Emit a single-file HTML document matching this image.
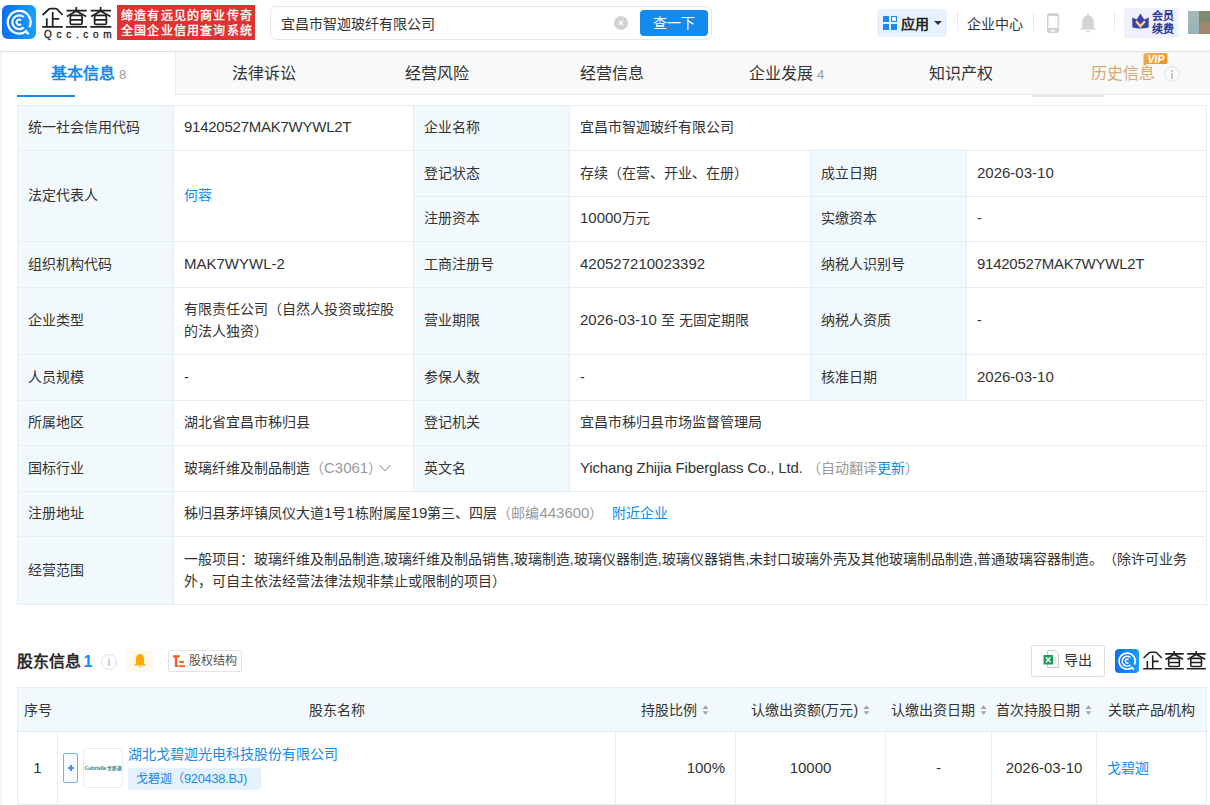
<!DOCTYPE html>
<html lang="zh-CN"><head><meta charset="utf-8">
<style>
*{box-sizing:border-box;margin:0;padding:0}
html,body{text-spacing-trim:space-all;width:1210px;height:805px;overflow:hidden;background:#f5f5f5;font-family:"Liberation Sans",sans-serif;color:#333;font-size:14px}
.abs{position:absolute}
#hdr{position:absolute;left:0;top:0;width:1210px;height:52px;background:#fff;border-bottom:1px solid #e0e0e0}
#card{position:absolute;left:2px;top:52px;width:1208px;height:753px;background:#fff}
.tab{position:absolute;top:52px;height:43px;background:#f7f7f7;border-left:1px solid #ebebeb;border-bottom:1px solid #ebebeb;font-size:16px;color:#333;text-align:center;line-height:42px}
.t{position:absolute;white-space:nowrap;line-height:20px}
.lb{position:absolute;background:#f2f9fc}
.hl{position:absolute;height:1px;background:#e4eef6}
.c{position:absolute;display:flex;align-items:center;padding-left:10px;font-size:14px;line-height:22px;color:#333;white-space:nowrap}
.n{font-size:15px}
.vl{position:absolute;width:1px;background:#e4eef6}
</style></head><body>
<div id="hdr">
  <div class="abs" style="left:2px;top:5px;width:34px;height:34px;border-radius:6px;background:linear-gradient(90deg,#0d6ff0,#16a0fd)">
    <svg width="34" height="34" viewBox="0 0 34 34" style="position:absolute;left:0;top:0">
      <path d="M24.06 26.31 A11.4 11.4 0 1 1 27.45 22.2" fill="none" stroke="#fff" stroke-width="2.2"/>
      <path d="M23.1 25.2 L26.6 29.2" fill="none" stroke="#fff" stroke-width="2.2"/>
      <path d="M21.82 22.33 A6.9 6.9 0 1 1 21.73 11.99" fill="none" stroke="#fff" stroke-width="2.2"/>
      <path d="M19.04 19.04 A2.6 2.6 0 1 1 19.04 15.36" fill="none" stroke="#fff" stroke-width="2"/>
    </svg>
  </div>
  <svg class="abs" style="left:0;top:0" width="116" height="45" viewBox="0 0 116 45">
    <g id="logoG" fill="none" stroke="#222" stroke-width="1.75">
      <path d="M42.6 15 L49 9 Q49.6 8.6 50.4 8.6 L55.4 8.6 Q56.2 8.6 56.8 9 L62.6 15"/>
      <path d="M52.7 12 V26.7 M52.7 18.75 H59.2 M46.8 18.3 V26.7 M42.2 26.8 H62.8"/>
      <g id="cha">
        <path d="M66.4 10.5 H86.8 M76.3 7 V11.2 M76 11.2 L66.8 16.6 M76.6 11.2 L86.2 16.4"/>
        <rect x="70.3" y="15.4" width="11.8" height="9" rx="1.5"/>
        <path d="M70.3 19.9 H82.1 M65.9 26.8 H87"/>
      </g>
      <use href="#cha" x="24.3"/>
    </g>
  </svg>
  <div class="t" style="left:44px;top:28.5px;font-size:10px;line-height:12px;color:#222;letter-spacing:4.7px;-webkit-text-stroke:0.3px #222">Qcc.com</div>
  <div class="abs" style="left:117px;top:5px;width:138px;height:35px;background:#e03331"></div>
  <div class="t" style="left:121px;top:8.5px;font-size:12px;line-height:15.3px;color:#fff;letter-spacing:1.2px;-webkit-text-stroke:0.35px #fff">缔造有远见的商业传奇<br>全国企业信用查询系统</div>
  <div class="abs" style="left:270px;top:6px;width:442px;height:34px;border:1px solid #e6e6e6;border-radius:6px;background:#fff"></div>
  <div class="t" style="left:281px;top:14px;font-size:14px;color:#333">宜昌市智迦玻纤有限公司</div>
  <div class="abs" style="left:614px;top:16px;width:14px;height:14px;border-radius:7px;background:#d2d2d2">
    <svg width="14" height="14" viewBox="0 0 14 14" style="position:absolute;left:0;top:0"><path d="M5 5 L9 9 M9 5 L5 9" stroke="#fff" stroke-width="1.1"/></svg>
  </div>
  <div class="abs" style="left:640px;top:10px;width:68px;height:26px;border-radius:4px;background:#128bed;color:#fff;font-size:14px;line-height:26px;text-align:center;letter-spacing:0px">查一下</div>
  <div class="abs" style="left:877px;top:9px;width:70px;height:28px;border-radius:4px;background:#e8f2fe"></div>
  <div class="abs" style="left:883px;top:16px;width:14px;height:14px">
    <div class="abs" style="left:0;top:0;width:6px;height:6px;background:#1a8af0"></div>
    <div class="abs" style="left:8px;top:0;width:6px;height:6px;border:1.5px solid #1a8af0"></div>
    <div class="abs" style="left:0;top:8px;width:6px;height:6px;background:#1a8af0"></div>
    <div class="abs" style="left:8px;top:8px;width:6px;height:6px;background:#1a8af0"></div>
  </div>
  <div class="t" style="left:901px;top:14px;font-size:14px;font-weight:bold;color:#222">应用</div>
  <div class="abs" style="left:934px;top:21px;width:0;height:0;border-left:4px solid transparent;border-right:4px solid transparent;border-top:4px solid #333"></div>
  <div class="abs" style="left:957px;top:13px;width:1px;height:18px;background:#e8e8e8"></div>
  <div class="t" style="left:967px;top:14px;font-size:14px;color:#333">企业中心</div>
  <div class="abs" style="left:1033px;top:13px;width:1px;height:18px;background:#e8e8e8"></div>
  <svg class="abs" style="left:1046px;top:12px" width="14" height="22" viewBox="0 0 14 22"><path d="M3.5 1 H10.5 Q13 1 13 3.5 V18.5 Q13 21 10.5 21 H3.5 Q1 21 1 18.5 V3.5 Q1 1 3.5 1Z M2.5 4 V16.1 H11.5 V4Z M4.8 18 V19.5 H9 V18Z" fill="#d2d2d2" fill-rule="evenodd"/></svg>
  <svg class="abs" style="left:1079px;top:12px" width="18" height="22" viewBox="0 0 18 22"><path d="M9 1 L10.3 3.4 Q14.8 4.4 14.8 10 V15.2 L17.2 17.8 H0.8 L3.2 15.2 V10 Q3.2 4.4 7.7 3.4Z" fill="#d4d4d4"/><path d="M6.8 19 H11.2 Q10.5 20.6 9 20.6 Q7.5 20.6 6.8 19Z" fill="#d4d4d4"/></svg>
  <div class="abs" style="left:1114px;top:13px;width:1px;height:18px;background:#e8e8e8"></div>
  <div class="abs" style="left:1124px;top:8px;width:55px;height:30px;border-radius:2px;background:#f0f1fd"></div>
  <svg class="abs" style="left:1131px;top:13px" width="19" height="17" viewBox="0 0 19 17"><path d="M1.2 4.4 L5.7 6.4 L9.4 0.4 L13.2 6.4 L17.8 4.4 L17.6 14.6 Q9.4 16.6 1.4 14.6Z" fill="#3a44a6"/><path d="M5.1 8.3 L9.4 13.2 L13.9 8.3" fill="none" stroke="#fcd28e" stroke-width="2.3"/></svg>
  <div class="t" style="left:1152px;top:9.5px;font-size:11px;line-height:13px;font-weight:bold;color:#2f3a9a">会员<br>续费</div>
  <div class="abs" style="left:1188px;top:11px;width:11px;height:11px;background:#a3b8b6"></div>
  <div class="abs" style="left:1199px;top:11px;width:11px;height:11px;background:#7f8a73"></div>
  <div class="abs" style="left:1188px;top:22px;width:11px;height:12px;background:#9ab4b8"></div>
  <div class="abs" style="left:1199px;top:22px;width:11px;height:12px;background:#9e8670"></div>
</div>
<div id="card"></div>
<div class="abs" style="left:2px;top:52px;width:173px;height:43px;background:#fff"></div>
<div class="abs" style="left:175px;top:52px;width:1035px;height:43px;background:#f9f9f9;border-left:1px solid #ebebeb;border-bottom:1px solid #ebebeb"></div>
<div class="t" style="left:51px;top:64px;font-size:16px;color:#128bed;font-weight:bold">基本信息</div>
<div class="t" style="left:119px;top:65px;font-size:13px;color:#999">8</div>
<div class="abs" style="left:17px;top:95px;width:58px;height:2px;background:#128bed"></div>
<div class="t" style="left:231.5px;top:64px;font-size:16px;color:#333">法律诉讼</div>
<div class="t" style="left:405.4px;top:64px;font-size:16px;color:#333">经营风险</div>
<div class="t" style="left:579.8px;top:64px;font-size:16px;color:#333">经营信息</div>
<div class="t" style="left:928.7px;top:64px;font-size:16px;color:#333">知识产权</div>
<div class="t" style="left:749px;top:64px;font-size:16px;color:#333">企业发展</div>
<div class="t" style="left:817px;top:65px;font-size:13px;color:#999">4</div>
<div class="t" style="left:1091px;top:64px;font-size:16px;color:#d6a873">历史信息</div>
<div class="abs" style="left:1164px;top:66px;width:16px;height:16px;border:1.2px solid #dde1e8;border-radius:50%"></div><div class="abs" style="left:1171.2px;top:70px;width:1.6px;height:1.6px;background:#c5cbd6"></div><div class="abs" style="left:1171.2px;top:73px;width:1.6px;height:6px;background:#c5cbd6"></div>
<svg class="abs" style="left:1143px;top:53px" width="25" height="13" viewBox="0 0 25 13"><defs><linearGradient id="vg" x1="0" y1="0" x2="1" y2="1"><stop offset="0" stop-color="#f4b355"/><stop offset="1" stop-color="#e8901f"/></linearGradient></defs><path d="M2.5 0 H22.5 Q24.5 0 24.5 2 V9 Q24.5 11 22.5 11 H4 L0.5 13 V2 Q0.5 0 2.5 0Z" fill="url(#vg)"/><text x="13" y="9.6" text-anchor="middle" font-family="Liberation Sans" font-size="10.5" font-weight="bold" font-style="italic" fill="#fff">VIP</text></svg>
<div class="abs" style="left:1032px;top:95px;width:72px;height:2px;background:#e6e6e6"></div>
<div class="lb" style="left:17px;top:105px;width:156px;height:499px"></div>
<div class="lb" style="left:413px;top:105px;width:156px;height:386px"></div>
<div class="lb" style="left:810px;top:150px;width:156px;height:250px"></div>
<div class="hl" style="left:17px;top:105px;width:1190px"></div>
<div class="hl" style="left:17px;top:150px;width:1190px"></div>
<div class="hl" style="left:413px;top:196px;width:794px"></div>
<div class="hl" style="left:17px;top:241px;width:1190px"></div>
<div class="hl" style="left:17px;top:287px;width:1190px"></div>
<div class="hl" style="left:17px;top:354px;width:1190px"></div>
<div class="hl" style="left:17px;top:400px;width:1190px"></div>
<div class="hl" style="left:17px;top:445px;width:1190px"></div>
<div class="hl" style="left:17px;top:491px;width:1190px"></div>
<div class="hl" style="left:17px;top:536px;width:1190px"></div>
<div class="hl" style="left:17px;top:604px;width:1190px"></div>
<div class="vl" style="left:17px;top:105px;height:500px"></div>
<div class="vl" style="left:173px;top:105px;height:500px"></div>
<div class="vl" style="left:413px;top:105px;height:386px"></div>
<div class="vl" style="left:569px;top:105px;height:386px"></div>
<div class="vl" style="left:810px;top:150px;height:250px"></div>
<div class="vl" style="left:966px;top:150px;height:250px"></div>
<div class="vl" style="left:1206px;top:105px;height:500px"></div>
<div class="c" style="left:18px;top:106px;width:155px;height:44px;padding-bottom:2px"><div>统一社会信用代码</div></div>
<div class="c" style="left:174px;top:106px;width:239px;height:44px;padding-bottom:2px"><div><span class="n" style="letter-spacing:-0.25px">91420527MAK7WYWL2T</span></div></div>
<div class="c" style="left:414px;top:106px;width:155px;height:44px;padding-bottom:2px"><div>企业名称</div></div>
<div class="c" style="left:570px;top:106px;width:636px;height:44px;padding-bottom:2px"><div>宜昌市智迦玻纤有限公司</div></div>
<div class="c" style="left:18px;top:151px;width:155px;height:90px;padding-bottom:2px"><div>法定代表人</div></div>
<div class="c" style="left:174px;top:151px;width:239px;height:90px;padding-bottom:2px"><div><span style="color:#128bed">何蓉</span></div></div>
<div class="c" style="left:414px;top:151px;width:155px;height:45px;padding-bottom:2px"><div>登记状态</div></div>
<div class="c" style="left:570px;top:151px;width:240px;height:45px;padding-bottom:2px"><div>存续（在营、开业、在册）</div></div>
<div class="c" style="left:811px;top:151px;width:155px;height:45px;padding-bottom:2px"><div>成立日期</div></div>
<div class="c" style="left:967px;top:151px;width:239px;height:45px;padding-bottom:2px"><div><span class="n">2026-03-10</span></div></div>
<div class="c" style="left:414px;top:197px;width:155px;height:44px;padding-bottom:2px"><div>注册资本</div></div>
<div class="c" style="left:570px;top:197px;width:240px;height:44px;padding-bottom:2px"><div><span class="n">10000</span>万元</div></div>
<div class="c" style="left:811px;top:197px;width:155px;height:44px;padding-bottom:2px"><div>实缴资本</div></div>
<div class="c" style="left:967px;top:197px;width:239px;height:44px;padding-bottom:2px"><div>-</div></div>
<div class="c" style="left:18px;top:242px;width:155px;height:45px;padding-bottom:2px"><div>组织机构代码</div></div>
<div class="c" style="left:174px;top:242px;width:239px;height:45px;padding-bottom:2px"><div><span class="n">MAK7WYWL-2</span></div></div>
<div class="c" style="left:414px;top:242px;width:155px;height:45px;padding-bottom:2px"><div>工商注册号</div></div>
<div class="c" style="left:570px;top:242px;width:240px;height:45px;padding-bottom:2px"><div><span class="n">420527210023392</span></div></div>
<div class="c" style="left:811px;top:242px;width:155px;height:45px;padding-bottom:2px"><div>纳税人识别号</div></div>
<div class="c" style="left:967px;top:242px;width:239px;height:45px;padding-bottom:2px"><div><span class="n" style="letter-spacing:-0.25px">91420527MAK7WYWL2T</span></div></div>
<div class="c" style="left:18px;top:288px;width:155px;height:66px;padding-bottom:2px"><div>企业类型</div></div>
<div class="c" style="left:174px;top:288px;width:239px;height:66px;padding-bottom:2px"><div>有限责任公司（自然人投资或控股<br>的法人独资）</div></div>
<div class="c" style="left:414px;top:288px;width:155px;height:66px;padding-bottom:2px"><div>营业期限</div></div>
<div class="c" style="left:570px;top:288px;width:240px;height:66px;padding-bottom:2px"><div><span class="n">2026-03-10 </span>至 无固定期限</div></div>
<div class="c" style="left:811px;top:288px;width:155px;height:66px;padding-bottom:2px"><div>纳税人资质</div></div>
<div class="c" style="left:967px;top:288px;width:239px;height:66px;padding-bottom:2px"><div>-</div></div>
<div class="c" style="left:18px;top:355px;width:155px;height:45px;padding-bottom:2px"><div>人员规模</div></div>
<div class="c" style="left:174px;top:355px;width:239px;height:45px;padding-bottom:2px"><div>-</div></div>
<div class="c" style="left:414px;top:355px;width:155px;height:45px;padding-bottom:2px"><div>参保人数</div></div>
<div class="c" style="left:570px;top:355px;width:240px;height:45px;padding-bottom:2px"><div>-</div></div>
<div class="c" style="left:811px;top:355px;width:155px;height:45px;padding-bottom:2px"><div>核准日期</div></div>
<div class="c" style="left:967px;top:355px;width:239px;height:45px;padding-bottom:2px"><div><span class="n">2026-03-10</span></div></div>
<div class="c" style="left:18px;top:401px;width:155px;height:44px;padding-bottom:2px"><div>所属地区</div></div>
<div class="c" style="left:174px;top:401px;width:239px;height:44px;padding-bottom:2px"><div>湖北省宜昌市秭归县</div></div>
<div class="c" style="left:414px;top:401px;width:155px;height:44px;padding-bottom:2px"><div>登记机关</div></div>
<div class="c" style="left:570px;top:401px;width:636px;height:44px;padding-bottom:2px"><div>宜昌市秭归县市场监督管理局</div></div>
<div class="c" style="left:18px;top:446px;width:155px;height:45px;padding-bottom:2px"><div>国标行业</div></div>
<div class="c" style="left:174px;top:446px;width:239px;height:45px;padding-bottom:2px"><div>玻璃纤维及制品制造<span style="color:#999">（<span class="n">C3061</span>）</span><svg width="12" height="8" viewBox="0 0 12 8" style="margin-left:-3.5px;vertical-align:1px"><path d="M0.8 1.3 L6 6.8 L11.2 1.3" fill="none" stroke="#a8a8a8" stroke-width="1.1"/></svg></div></div>
<div class="c" style="left:414px;top:446px;width:155px;height:45px;padding-bottom:2px"><div>英文名</div></div>
<div class="c" style="left:570px;top:446px;width:636px;height:45px;padding-bottom:2px"><div><span class="n" style="letter-spacing:-0.15px">Yichang Zhijia Fiberglass Co., Ltd. </span><span style="color:#999">（自动翻译<span style="color:#128bed">更新</span>）</span></div></div>
<div class="c" style="left:18px;top:492px;width:155px;height:44px;padding-bottom:2px"><div>注册地址</div></div>
<div class="c" style="left:174px;top:492px;width:1032px;height:44px;padding-bottom:2px"><div>秭归县茅坪镇凤仪大道<span class="n">1</span>号<span class="n">1</span>栋附属屋<span class="n">19</span>第三、四层<span style="color:#999">（邮编<span class="n">443600</span>）</span> <span style="color:#128bed;margin-left:5px">附近企业</span></div></div>
<div class="c" style="left:18px;top:537px;width:155px;height:67px;padding-bottom:2px"><div>经营范围</div></div>
<div class="c" style="left:174px;top:537px;width:1032px;height:67px;padding-bottom:2px"><div>一般项目：玻璃纤维及制品制造,玻璃纤维及制品销售,玻璃制造,玻璃仪器制造,玻璃仪器销售,未封口玻璃外壳及其他玻璃制品制造,普通玻璃容器制造。（除许可业务<br>外，可自主依法经营法律法规非禁止或限制的项目）</div></div>
<div class="t" style="left:16.5px;top:651px;font-size:16px;line-height:22px;font-weight:600;color:#2a2a2a">股东信息</div>
<div class="t" style="left:83.5px;top:651px;font-size:16px;line-height:22px;font-weight:bold;color:#128bed">1</div>
<div class="abs" style="left:101px;top:654px;width:16px;height:16px;border:1.3px solid #dde2ea;border-radius:50%"></div><div class="abs" style="left:108.2px;top:657.5px;width:1.6px;height:1.6px;background:#c8ced8"></div><div class="abs" style="left:108.2px;top:660.3px;width:1.6px;height:5.5px;background:#c8ced8"></div>
<div class="abs" style="left:126px;top:650px;width:27px;height:22px;border-radius:3px;background:#fff8ec"></div>
<svg class="abs" style="left:133px;top:653px" width="14" height="16" viewBox="0 0 14 16"><path d="M7 1 C4.3 1 3 3.2 3 6 L3 10.5 L1 12.6 L13 12.6 L11 10.5 L11 6 C11 3.2 9.7 1 7 1Z" fill="#ffaa00"/><path d="M5.5 13.2 H8.5 L7 15Z" fill="#ffaa00"/></svg>
<div class="abs" style="left:168px;top:650px;width:74px;height:22px;border:1px solid #e3e3e3;border-radius:2px;background:#fff"></div>
<svg class="abs" style="left:173px;top:655px" width="13" height="13" viewBox="0 0 13 13"><path d="M0.1 0.3 H6.7 V2.4 H4.1 V10 H5.3 V12.1 H1.8 V2.4 H0.1Z" fill="#ff5a1f"/><rect x="6.3" y="6" width="4.6" height="1.9" fill="#ff5a1f"/><rect x="6.3" y="10.2" width="5.9" height="1.9" fill="#ff5a1f"/></svg>
<div class="t" style="left:189px;top:651px;font-size:12px;line-height:20px;color:#555">股权结构</div>
<div class="abs" style="left:1031px;top:645px;width:74px;height:32px;border:1px solid #dcdcdc;border-radius:3px;background:#fff"></div>
<svg class="abs" style="left:1043px;top:650px" width="17" height="18" viewBox="0 0 17 18"><path d="M4.5 0.5 H12 L15.5 4 V17.5 H4.5Z" fill="#fff" stroke="#c9c9c9" stroke-width="1"/><path d="M10 8 H13.5 M10 10.5 H13.5 M10 13 H13.5" stroke="#c9c9c9" stroke-width="0.9"/><rect x="0.5" y="5" width="9.5" height="9.5" fill="#1f9d5c"/><path d="M3 7.3 L7.5 12.2 M7.5 7.3 L3 12.2" stroke="#fff" stroke-width="1.3"/></svg>
<div class="t" style="left:1064px;top:650px;font-size:14px;color:#333">导出</div>
<div class="abs" style="left:1115px;top:649px;width:24px;height:24px;border-radius:4px;background:linear-gradient(90deg,#0d6ff0,#16a0fd)">
    <svg width="24" height="24" viewBox="0 0 34 34" style="position:absolute;left:0;top:0">
      <path d="M24.06 26.31 A11.4 11.4 0 1 1 27.45 22.2" fill="none" stroke="#fff" stroke-width="2.4"/>
      <path d="M23.1 25.2 L26.6 29.2" fill="none" stroke="#fff" stroke-width="2.4"/>
      <path d="M21.82 22.33 A6.9 6.9 0 1 1 21.73 11.99" fill="none" stroke="#fff" stroke-width="2.4"/>
      <path d="M19.04 19.04 A2.6 2.6 0 1 1 19.04 15.36" fill="none" stroke="#fff" stroke-width="2.2"/>
    </svg></div>
<svg class="abs" style="left:1143px;top:651px" width="64" height="19" viewBox="42 7.5 70.5 20.5"><g fill="none" stroke="#222" stroke-width="1.9"><use href="#logoG"/></g></svg>
<div class="lb" style="left:17px;top:687px;width:1190px;height:44px"></div>
<div class="hl" style="left:17px;top:687px;width:1190px"></div>
<div class="hl" style="left:17px;top:731px;width:1190px"></div>
<div class="hl" style="left:17px;top:804px;width:1190px"></div>
<div class="vl" style="left:17px;top:687px;height:118px"></div>
<div class="abs" style="left:57px;top:687px;width:1px;height:1px;background:#f4f8fb"></div><div class="vl" style="left:57px;top:731px;height:74px"></div>
<div class="abs" style="left:615px;top:687px;width:1px;height:1px;background:#f4f8fb"></div><div class="vl" style="left:615px;top:731px;height:74px"></div>
<div class="abs" style="left:735px;top:687px;width:1px;height:1px;background:#f4f8fb"></div><div class="vl" style="left:735px;top:731px;height:74px"></div>
<div class="abs" style="left:885px;top:687px;width:1px;height:1px;background:#f4f8fb"></div><div class="vl" style="left:885px;top:731px;height:74px"></div>
<div class="abs" style="left:991px;top:687px;width:1px;height:1px;background:#f4f8fb"></div><div class="vl" style="left:991px;top:731px;height:74px"></div>
<div class="abs" style="left:1096px;top:687px;width:1px;height:1px;background:#f4f8fb"></div><div class="vl" style="left:1096px;top:731px;height:74px"></div>
<div class="vl" style="left:1206px;top:687px;height:118px"></div>
<div class="c" style="left:18px;top:688px;width:39px;height:43px;justify-content:flex-start;padding:0 0px 0 6px"><div>序号</div></div>
<div class="c" style="left:58px;top:688px;width:557px;height:43px;justify-content:center;padding:0"><div>股东名称</div></div>
<div class="c" style="left:616px;top:688px;width:119px;height:43px;justify-content:flex-end;padding:0 26px 0 0px"><div>持股比例<svg width="7" height="10" viewBox="0 0 7 10" style="margin-left:5px;vertical-align:0px"><path d="M0.5 3.9 L3.5 0.3 L6.5 3.9Z M0.5 6.2 L3.5 9.8 L6.5 6.2Z" fill="#a3a3a3"/></svg></div></div>
<div class="c" style="left:736px;top:688px;width:149px;height:43px;justify-content:center;padding:0"><div>认缴出资额(万元)<svg width="7" height="10" viewBox="0 0 7 10" style="margin-left:5px;vertical-align:0px"><path d="M0.5 3.9 L3.5 0.3 L6.5 3.9Z M0.5 6.2 L3.5 9.8 L6.5 6.2Z" fill="#a3a3a3"/></svg></div></div>
<div class="c" style="left:886px;top:688px;width:105px;height:43px;justify-content:center;padding:0"><div>认缴出资日期<svg width="7" height="10" viewBox="0 0 7 10" style="margin-left:5px;vertical-align:0px"><path d="M0.5 3.9 L3.5 0.3 L6.5 3.9Z M0.5 6.2 L3.5 9.8 L6.5 6.2Z" fill="#a3a3a3"/></svg></div></div>
<div class="c" style="left:992px;top:688px;width:104px;height:43px;justify-content:center;padding:0"><div>首次持股日期<svg width="7" height="10" viewBox="0 0 7 10" style="margin-left:5px;vertical-align:0px"><path d="M0.5 3.9 L3.5 0.3 L6.5 3.9Z M0.5 6.2 L3.5 9.8 L6.5 6.2Z" fill="#a3a3a3"/></svg></div></div>
<div class="c" style="left:1097px;top:688px;width:109px;height:43px;justify-content:center;padding:0"><div>关联产品/机构</div></div>
<div class="c" style="left:18px;top:732px;width:39px;height:72px;justify-content:center;padding:0"><div><span class="n">1</span></div></div>
<div class="abs" style="left:63px;top:753px;width:15px;height:30px;border:1px solid #6db1f5;border-radius:2px;background:#f6faff"></div>
<div class="abs" style="left:67.8px;top:766.8px;width:6.2px;height:2px;background:#3d8ff0"></div><div class="abs" style="left:69.9px;top:764.7px;width:2px;height:6.2px;background:#3d8ff0"></div>
<div class="abs" style="left:83px;top:748px;width:40px;height:40px;border:1px solid #ececec;border-radius:4px;background:#fff"></div>
<div class="t" style="left:84.5px;top:763.5px;font-size:5.6px;line-height:8px;font-weight:bold;color:#3b8585;font-family:'Liberation Serif',serif;letter-spacing:-0.1px">Gabrielle <span style="font-size:4.6px;letter-spacing:-0.3px">戈碧迦</span></div>
<div class="t" style="left:128px;top:743px;font-size:14px;line-height:22px;color:#128bed">湖北戈碧迦光电科技股份有限公司</div>
<div class="abs" style="left:128px;top:768px;width:133px;height:22px;border-radius:2px;background:#e5f2fd"></div>
<div class="t" style="left:136px;top:769px;font-size:12px;line-height:20px;color:#128bed">戈碧迦（<span style="font-size:12.8px;letter-spacing:-0.25px">920438.BJ)</span></div>
<div class="c" style="left:616px;top:732px;width:119px;height:72px;justify-content:flex-end;padding:0 10px 0 0"><div><span class="n">100%</span></div></div>
<div class="c" style="left:736px;top:732px;width:149px;height:72px;justify-content:center;padding:0"><div><span class="n">10000</span></div></div>
<div class="c" style="left:886px;top:732px;width:105px;height:72px;justify-content:center;padding:0"><div><span class="n">-</span></div></div>
<div class="c" style="left:992px;top:732px;width:104px;height:72px;justify-content:center;padding:0"><div><span class="n"><span class="n">2026-03-10</span></span></div></div>
<div class="c" style="left:1097px;top:732px;width:109px;height:72px;padding-left:10px;color:#128bed"><div>戈碧迦</div></div>
</body></html>
